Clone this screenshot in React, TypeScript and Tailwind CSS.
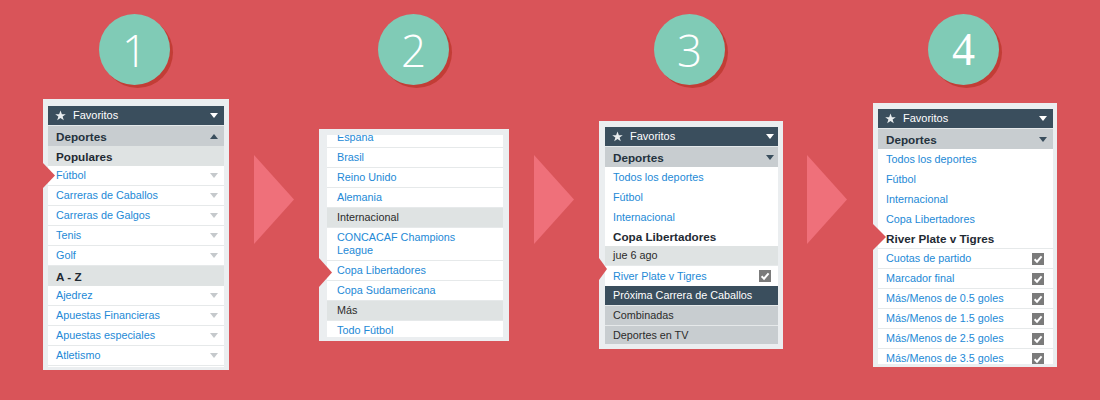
import React from "react";

type Kind =
  | "head"
  | "sport"
  | "sub"
  | "subN"
  | "link"
  | "plain"
  | "bold"
  | "boldLine"
  | "dark"
  | "gray";
type Icon = "down" | "up" | "sdown" | "chev" | "check";

type RowT = { t: React.ReactNode; k: Kind; icon?: Icon; h?: string };

const kinds: Record<Kind, string> = {
  head: "h-[20px] bg-[#3a4e5d] text-white text-[11px] border-b border-[#e4e8ea]",
  sport: "h-[20px] bg-[#c8cdd0] text-[#24323d] font-bold text-[11.7px]",
  sub: "h-[20px] bg-[#dfe3e3] text-[#1f2a33] font-bold text-[11.7px]",
  subN: "h-[20px] bg-[#dfe3e3] text-[#2b2b2b] text-[10.8px] border-b border-[#e6e9ea]",
  link: "h-[20px] bg-white text-[#2389d6] text-[10.8px] border-b border-[#e6e9ea]",
  plain: "h-[20px] bg-white text-[#2389d6] text-[10.8px]",
  bold: "h-[19px] bg-white text-[#1f2a33] font-bold text-[11.7px]",
  boldLine: "h-[20px] bg-white text-[#1f2a33] font-bold text-[11.7px] border-b border-[#e6e9ea]",
  dark: "h-[20px] bg-[#3a4e5d] text-white text-[10.8px] border-b border-[#e6e9ea]",
  gray: "h-[20px] bg-[#c8cdd0] text-[#2b2b2b] text-[10.8px] border-b border-[#e6e9ea]",
};

const Star = () => (
  <svg width="11" height="11" viewBox="0 0 24 24" className="shrink-0">
    <polygon
      points="12,1 15,9 23.5,9 16.6,14.2 19.2,22.6 12,17.4 4.8,22.6 7.4,14.2 0.5,9 9,9"
      fill="#e9edef"
    />
  </svg>
);

const IconEl = ({ i }: { i?: Icon }) => {
  if (!i) return null;
  if (i === "check")
    return (
      <svg width="12" height="12" viewBox="0 0 12 12" className="mr-[3px] shrink-0">
        <rect width="12" height="12" fill="#7b7b7b" />
        <path d="M2.6 6.3 L5 8.7 L9.6 3.3" stroke="#fff" strokeWidth="2" fill="none" />
      </svg>
    );
  if (i === "up")
    return (
      <svg width="8" height="5" viewBox="0 0 8 5" className="shrink-0">
        <polygon points="0,5 8,5 4,0" fill="#3a4e5d" />
      </svg>
    );
  const fill = i === "down" ? "#ffffff" : i === "sdown" ? "#3a4e5d" : "#c5c9cc";
  return (
    <svg width="8" height="5" viewBox="0 0 8 5" className="shrink-0">
      <polygon points="0,0 8,0 4,5" fill={fill} />
    </svg>
  );
};

const Row = ({ r, pl, pr }: { r: RowT; pl: string; pr: string }) => (
  <div className={`flex items-center justify-between shrink-0 leading-[13px] ${kinds[r.k]} ${r.h ?? ""} ${pl} ${pr}`}>
    {r.k === "head" ? (
      <div className="flex items-center gap-[7px] -ml-[1px]">
        <Star />
        <span>{r.t}</span>
      </div>
    ) : (
      <span>{r.t}</span>
    )}
    <IconEl i={r.icon} />
  </div>
);

const Notch = ({ top, w, h }: { top: string; w: number; h: number }) => (
  <svg width={w} height={h} viewBox={`0 0 ${w} ${h}`} className={`absolute left-0 ${top}`}>
    <polygon points={`0,0 ${w},${h / 2} 0,${h}`} fill="#d95459" />
  </svg>
);

const Panel = ({
  rows,
  outer,
  inner,
  pl = "pl-[8px]",
  pr = "pr-[6px]",
  shift = "",
  notch,
}: {
  rows: RowT[];
  outer: string;
  inner: string;
  pl?: string;
  pr?: string;
  shift?: string;
  notch: React.ReactNode;
}) => (
  <div className={`relative bg-[#ebeef0] ${outer}`}>
    <div className={`overflow-hidden bg-white ${inner}`}>
      <div className={`flex flex-col ${shift}`}>
        {rows.map((r, i) => (
          <Row key={i} r={r} pl={pl} pr={pr} />
        ))}
      </div>
    </div>
    {notch}
  </div>
);

const Circle = ({ n, cls, serif }: { n: string; cls: string; serif?: boolean }) => (
  <div
    className={`w-[71px] h-[71px] rounded-full bg-[#80cbb6] shadow-[3px_3px_0_#c23d36] flex items-center justify-center text-white leading-none ${cls} ${
      serif ? "font-['Liberation_Serif',serif] text-[46px]" : "font-['Open_Sans',sans-serif] font-light text-[44px]"
    }`}
  >
    {n}
  </div>
);

const Arrow = ({ cls }: { cls: string }) => (
  <div className={`mt-[155px] shrink-0 ${cls}`}>
    <svg width="40" height="89" viewBox="0 0 40 89">
      <polygon points="0,0 40,44.5 0,89" fill="#ef707a" />
    </svg>
  </div>
);

const p1: RowT[] = [
  { t: "Favoritos", k: "head", icon: "down" },
  { t: "Deportes", k: "sport", icon: "up" },
  { t: "Populares", k: "sub" },
  { t: "Fútbol", k: "link", icon: "chev" },
  { t: "Carreras de Caballos", k: "link", icon: "chev" },
  { t: "Carreras de Galgos", k: "link", icon: "chev" },
  { t: "Tenis", k: "link", icon: "chev" },
  { t: "Golf", k: "link", icon: "chev" },
  { t: "A - Z", k: "sub" },
  { t: "Ajedrez", k: "link", icon: "chev" },
  { t: "Apuestas Financieras", k: "link", icon: "chev" },
  { t: "Apuestas especiales", k: "link", icon: "chev" },
  { t: "Atletismo", k: "link", icon: "chev" },
];

const p2: RowT[] = [
  { t: "Espana", k: "link" },
  { t: "Brasil", k: "link" },
  { t: "Reino Unido", k: "link" },
  { t: "Alemania", k: "link" },
  { t: "Internacional", k: "subN" },
  {
    t: (
      <>
        CONCACAF Champions
        <br />
        League
      </>
    ),
    k: "link",
    h: "h-[33px]",
  },
  { t: "Copa Libertadores", k: "link" },
  { t: "Copa Sudamericana", k: "link" },
  { t: "Más", k: "subN" },
  { t: "Todo Fútbol", k: "link" },
];

const p3: RowT[] = [
  { t: "Favoritos", k: "head", icon: "down", h: "h-[19px]" },
  { t: "Deportes", k: "sport", icon: "sdown", h: "h-[19px]" },
  { t: "Todos los deportes", k: "plain" },
  { t: "Fútbol", k: "plain" },
  { t: "Internacional", k: "plain" },
  { t: "Copa Libertadores", k: "bold" },
  { t: "jue 6 ago", k: "subN" },
  { t: "River Plate v Tigres", k: "plain", icon: "check" },
  { t: "Próxima Carrera de Caballos", k: "dark" },
  { t: "Combinadas", k: "gray" },
  { t: "Deportes en TV", k: "gray" },
];

const p4: RowT[] = [
  { t: "Favoritos", k: "head", icon: "down", h: "h-[19px]" },
  { t: "Deportes", k: "sport", icon: "sdown", h: "h-[19px]" },
  { t: "Todos los deportes", k: "plain" },
  { t: "Fútbol", k: "plain" },
  { t: "Internacional", k: "plain" },
  { t: "Copa Libertadores", k: "plain" },
  { t: "River Plate v Tigres", k: "boldLine" },
  { t: "Cuotas de partido", k: "link", icon: "check" },
  { t: "Marcador final", k: "link", icon: "check" },
  { t: "Más/Menos de 0.5 goles", k: "link", icon: "check" },
  { t: "Más/Menos de 1.5 goles", k: "link", icon: "check" },
  { t: "Más/Menos de 2.5 goles", k: "link", icon: "check" },
  { t: "Más/Menos de 3.5 goles", k: "link", icon: "check" },
];

export default function App() {
  return (
    <div className="w-[1100px] h-[400px] overflow-hidden bg-[#d95459] flex items-start pl-[43px] font-['Liberation_Sans',Arial,sans-serif]">
      {/* Step 1 */}
      <div className="w-[186px] shrink-0 flex flex-col">
        <Circle n="1" cls="ml-[56px] mt-[14px]" />
        <Panel
          rows={p1}
          outer="w-[186px] mt-[14px] pt-[7px] px-[5px] pb-[3px]"
          inner="h-[261px]"
          notch={<Notch top="top-[64px]" w={12} h={25} />}
        />
      </div>

      <Arrow cls="ml-[25px] mr-[25px]" />

      {/* Step 2 */}
      <div className="w-[190px] shrink-0 flex flex-col">
        <Circle n="2" cls="ml-[59px] mt-[14px]" />
        <Panel
          rows={p2}
          outer="w-[190px] mt-[44px] pt-[6px] pl-[8px] pr-[6px] pb-[4px]"
          inner="h-[202px]"
          pl="pl-[10px]"
          shift="-mt-[7px]"
          notch={<Notch top="top-[129px]" w={13} h={29} />}
        />
      </div>

      <Arrow cls="ml-[25px] mr-[25px]" />

      {/* Step 3 */}
      <div className="w-[184px] shrink-0 flex flex-col">
        <Circle n="3" cls="ml-[55px] mt-[14px]" />
        <Panel
          rows={p3}
          outer="w-[184px] mt-[36px] pt-[6px] pl-[6px] pr-[5px] pb-[5px]"
          inner="h-[217px]"
          pr="pr-[4px]"
          notch={<Notch top="top-[137px]" w={8} h={22} />}
        />
      </div>

      <Arrow cls="ml-[24px] mr-[26px]" />

      {/* Step 4 */}
      <div className="w-[184px] shrink-0 flex flex-col">
        <Circle n="4" cls="ml-[55px] mt-[14px]" serif />
        <Panel
          rows={p4}
          outer="w-[184px] mt-[18px] pt-[6px] pl-[5px] pr-[4px] pb-[3px]"
          inner="h-[255px]"
          pr="pr-[6px]"
          notch={<Notch top="top-[121px]" w={13} h={26} />}
        />
      </div>
    </div>
  );
}
